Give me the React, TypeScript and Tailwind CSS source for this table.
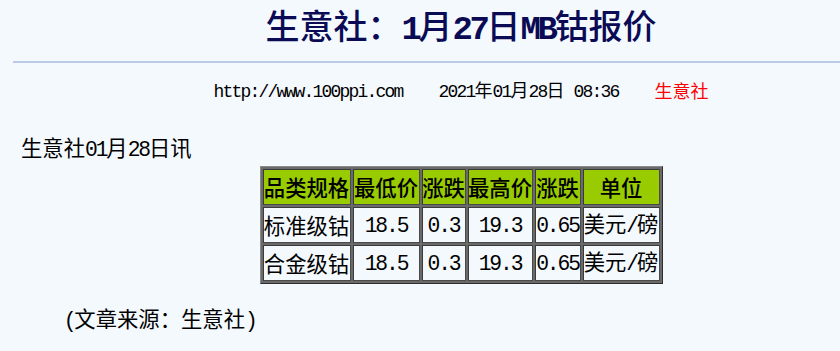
import React from "react";

// half-width latin glyphs, SimSun style: mono squeezed to 0.5em
function H({ children, b }: { children: React.ReactNode; b?: boolean }) {
  return (
    <span className={`font-['Liberation_Mono',monospace] tracking-[-0.1em] ${b ? "font-bold" : ""}`}>
      {children}
    </span>
  );
}

const head = ["品类规格", "最低价", "涨跌", "最高价", "涨跌", "单位"];
const widths = ["w-[84px]", "w-[63px]", "w-[40px]", "w-[61px]", "w-[42px]", "w-[73px]"];
const rows = [
  ["标准级钴", "18.5", "0.3", "19.3", "0.65"],
  ["合金级钴", "18.5", "0.3", "19.3", "0.65"],
];

const cell =
  "border border-solid border-t-[#3a3a3a] border-l-[#3a3a3a] border-b-[#4a4a4a] border-r-[#4a4a4a] px-px py-0";

function Box({ w, children }: { w: string; children: React.ReactNode }) {
  return (
    <div className={`${w} h-[34px] flex items-center justify-center whitespace-nowrap leading-none`}>
      <span>{children}</span>
    </div>
  );
}

export default function App() {
  return (
    <div className="w-[840px] h-[351px] overflow-hidden bg-[#f4f9fe] text-black font-['Noto_Sans_CJK_SC',sans-serif]">
      <div className="ml-[13px] w-[896px]">
        {/* Title */}
        <h1 className="h-[54px] flex items-center justify-center leading-none text-[34px] font-medium text-[#0b0b55]">
          <span>
            生意社：<H b>1</H>月<H b>27</H>日<H b>MB</H>钴报价
          </span>
        </h1>
        <div className="mt-[7px] h-[2px] bg-[#bccae6]" />

        {/* Source / date line */}
        <div className="mt-[15px] h-[24px] flex items-center justify-center gap-[36px] text-[18px] leading-none">
          <span>
            <H>http://www.100ppi.com</H>
          </span>
          <span>
            <H>2021</H>年<H>01</H>月<H>28</H>日<H> 08:36</H>
          </span>
          <span className="text-[#ff0000]">生意社</span>
        </div>

        {/* Body */}
        <div className="px-[8px] text-[21.33px]">
          <div className="mt-[33px] h-[28px] flex items-center leading-none">
            <span>
              生意社<H>01</H>月<H>28</H>日讯
            </span>
          </div>

          <div className="mt-[3px] flex justify-center">
            <table className="border-separate border-spacing-[2px] border border-solid border-t-[#8a8a8a] border-l-[#8a8a8a] border-b-[#2e2e2e] border-r-[#2e2e2e] bg-[#6a6a6a]">
              <thead>
                <tr>
                  {head.map((h, i) => (
                    <th key={i} className={`${cell} bg-[#99cc00] font-medium`}>
                      <Box w={widths[i]}>{h}</Box>
                    </th>
                  ))}
                </tr>
              </thead>
              <tbody>
                {rows.map((r, i) => (
                  <tr key={i}>
                    <td className={`${cell} bg-[#f4f9fe]`}>
                      <Box w={widths[0]}>{r[0]}</Box>
                    </td>
                    {r.slice(1).map((v, j) => (
                      <td key={j} className={`${cell} bg-[#f4f9fe]`}>
                        <Box w={widths[j + 1]}>
                          <H>{v}</H>
                        </Box>
                      </td>
                    ))}
                    <td className={`${cell} bg-[#f4f9fe]`}>
                      <Box w={widths[5]}>
                        美元<H>/</H>磅
                      </Box>
                    </td>
                  </tr>
                ))}
              </tbody>
            </table>
          </div>

          <div className="mt-[22px] h-[28px] flex items-center leading-none pl-[42.67px]">
            <span>
              <H>(</H>文章来源：生意社<H>)</H>
            </span>
          </div>
        </div>
      </div>
    </div>
  );
}
